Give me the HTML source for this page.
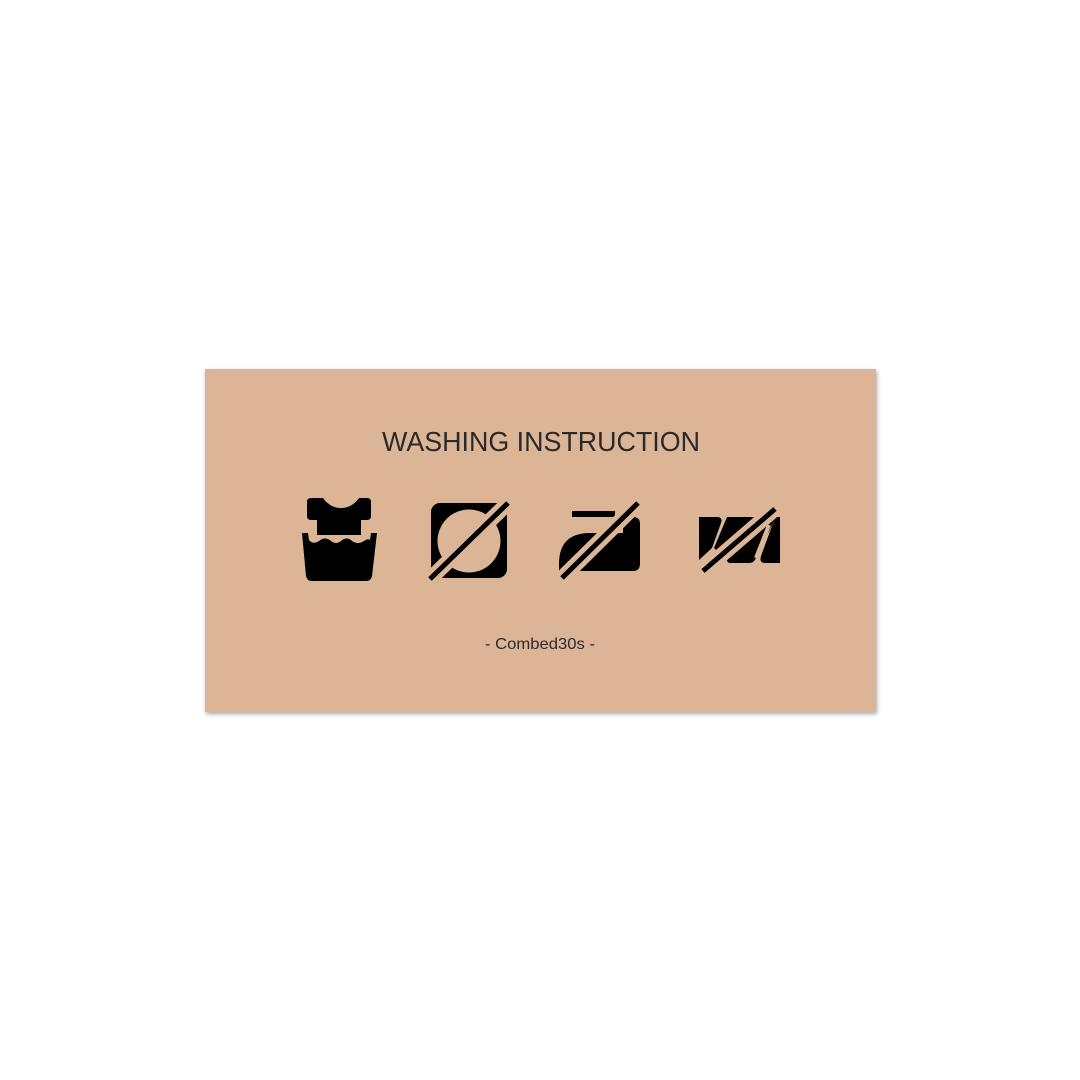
<!DOCTYPE html>
<html><head><meta charset="utf-8"><style>
html,body{margin:0;padding:0;background:#fff;width:1080px;height:1080px;overflow:hidden}
.card{position:absolute;left:205px;top:369px;width:671px;height:343px;background:#dcb596;box-shadow:1px 2px 4px rgba(0,0,0,0.35)}
svg{position:absolute;left:0;top:0}
</style></head><body>
<div class="card"></div>
<svg width="1080" height="1080" viewBox="0 0 1080 1080">
<text x="541" y="451" text-anchor="middle" font-family="Liberation Sans, sans-serif" font-size="28" fill="#2a2a2a" textLength="318" lengthAdjust="spacingAndGlyphs">WASHING INSTRUCTION</text>
<text x="540" y="649" text-anchor="middle" font-family="Liberation Sans, sans-serif" font-size="16" fill="#2a2a2a" textLength="110" lengthAdjust="spacingAndGlyphs">- Combed30s -</text>
<!-- icon 1 -->
<path d="M311,498 H323 Q330,508 341,508 Q352,508 359,498 H367 Q371,498 371,502 V516 Q371,520 367,520 H361 V535 H317 V520 H311 Q307,520 307,516 V502 Q307,498 311,498 Z" fill="#000"/>
<path d="M302,533 L308,533 L309,540 Q313,545 319,541 Q325,536 331,541 Q336,545 341,541 Q347,536 352,541 Q358,545 364,541 Q368,538 370,540 L371,533 L377,533 L372,576 Q371,581 366,581 H312 Q307,581 306,576 Z" fill="#000"/>
<!-- icon 2 -->
<rect x="431" y="503" width="76" height="75" rx="9" fill="#000"/>
<circle cx="469" cy="541" r="31.5" fill="#dcb596"/>
<line x1="430" y1="579" x2="508" y2="503" stroke="#dcb596" stroke-width="15"/>
<line x1="430" y1="579" x2="508" y2="503" stroke="#000" stroke-width="5"/>
<!-- icon 3 -->
<rect x="572" y="511" width="43" height="6" fill="#000"/>
<path d="M590,533 H623 V523 L633,517 Q640,517 640,524 V564 Q640,571 633,571 H559 V564 Q559,533 590,533 Z" fill="#000"/>
<line x1="562" y1="578" x2="638" y2="503" stroke="#dcb596" stroke-width="15"/>
<line x1="562" y1="578" x2="638" y2="503" stroke="#000" stroke-width="5"/>
<!-- icon 4 -->
<path d="M699,517 H717 Q723,517 721,523 L712,548 L699,560 Z" fill="#000"/>
<path d="M727,517 H776 L756,558 Q754,563 749,563 H729 L714,548 Z" fill="#000"/>
<path d="M772,526 L761,556 Q759,563 765,563 H780 V517 H776 Z" fill="#000"/>
<line x1="756" y1="558" x2="769" y2="525" stroke="#dcb596" stroke-width="4"/>
<line x1="703" y1="571" x2="775" y2="509" stroke="#dcb596" stroke-width="15"/>
<line x1="703" y1="571" x2="775" y2="509" stroke="#000" stroke-width="5"/>
</svg>
</body></html>
